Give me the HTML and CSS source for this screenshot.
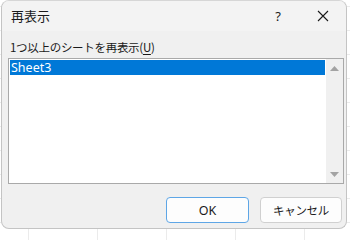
FILE: index.html
```html
<!DOCTYPE html>
<html lang="ja">
<head>
<meta charset="utf-8">
<link rel="stylesheet" href="styles.css">
</head>
<body>
<div class="dialog">
  <div class="titlebar">
    <div class="title">再表示</div>
    <div class="cap-btn help">?</div>
    <div class="cap-btn close">
      <svg width="12" height="12" viewBox="0 0 12 12"><path d="M1 1 L11 11 M11 1 L1 11" stroke="#1a1a1a" stroke-width="1.1" fill="none"/></svg>
    </div>
  </div>
  <div class="content">
    <div class="label">1つ以上のシートを再表示(<u>U</u>)</div>
    <div class="list">
      <div class="items">
        <div class="item selected">Sheet3</div>
      </div>
      <div class="scrollbar">
        <svg class="arrow" width="9" height="5" viewBox="0 0 9 5"><path d="M0 5 L4.5 0 L9 5 Z" fill="#a3a3a3"/></svg>
        <svg class="arrow" width="9" height="5" viewBox="0 0 9 5"><path d="M0 0 L9 0 L4.5 5 Z" fill="#a3a3a3"/></svg>
      </div>
    </div>
  </div>
  <div class="buttons">
    <div class="btn default">OK</div>
    <div class="btn cancel">キャンセル</div>
  </div>
</div>
</body>
</html>
```
FILE: styles.css
```css
html, body {
  margin: 0;
  padding: 0;
}
body {
  width: 350px;
  height: 231px;
  overflow: hidden;
  background-color: #ffffff;
  background-image:
    linear-gradient(to bottom, transparent 6px, #ebebeb 6px, #ebebeb 7px, transparent 7px),
    linear-gradient(to right, transparent 28px, #ebebeb 28px, #ebebeb 29px, transparent 29px);
  background-size: 100% 24px, 69px 100%;
  font-family: "Noto Sans CJK JP", "Noto Sans", sans-serif;
  color: #1a1a1a;
}
.dialog {
  box-sizing: border-box;
  margin-left: 1px;
  width: 346px;
  height: 229px;
  background: #f0f0f0;
  border: 1px solid #c4c4c4;
  border-top-color: #d6d6d6;
  border-radius: 8px;
  display: flex;
  flex-direction: column;
  overflow: hidden;
}
.titlebar {
  height: 30px;
  display: flex;
  align-items: center;
  background: #f3f3f3;
}
.title {
  flex: 1;
  padding-left: 9px;
  font-size: 13px;
  line-height: 16px;
}
.cap-btn {
  width: 44px;
  height: 30px;
  display: flex;
  align-items: center;
  justify-content: center;
}
.help {
  font-family: "Noto Sans", sans-serif;
  font-size: 13px;
}
.close {
  width: 46px;
}
.content {
  padding: 8px 2px 0 6px;
}
.label {
  font-size: 11.5px;
  letter-spacing: -0.3px;
  line-height: 17px;
  padding-left: 2px;
  margin-bottom: 2px;
}
.label u {
  text-underline-offset: 2px;
}
.list {
  box-sizing: border-box;
  width: 336px;
  height: 126px;
  background: #ffffff;
  border: 1px solid #a9a9a9;
  display: flex;
}
.items {
  flex: 1;
  padding: 1px;
}
.item {
  height: 15px;
  line-height: 15px;
  font-size: 12.5px;
  padding-left: 1px;
  font-family: "Noto Sans", sans-serif;
}
.selected {
  background: #0078d7;
  color: #ffffff;
}
.scrollbar {
  width: 17px;
  background: #f0f0f0;
  display: flex;
  flex-direction: column;
  align-items: center;
  justify-content: space-between;
  padding: 7px 0 6px;
}
.buttons {
  display: flex;
  justify-content: flex-end;
  gap: 11px;
  padding: 13px 4px 0 0;
}
.btn {
  box-sizing: border-box;
  width: 82px;
  height: 26px;
  background: #fdfdfd;
  border: 1px solid #d0d0d0;
  border-radius: 4px;
  display: flex;
  align-items: center;
  justify-content: center;
  font-size: 12.5px;
}
.cancel {
  font-size: 11.5px;
  letter-spacing: -0.3px;
}
.default {
  width: 83px;
  border-color: #5ea6e6;
  font-family: "Noto Sans", sans-serif;
}
```
